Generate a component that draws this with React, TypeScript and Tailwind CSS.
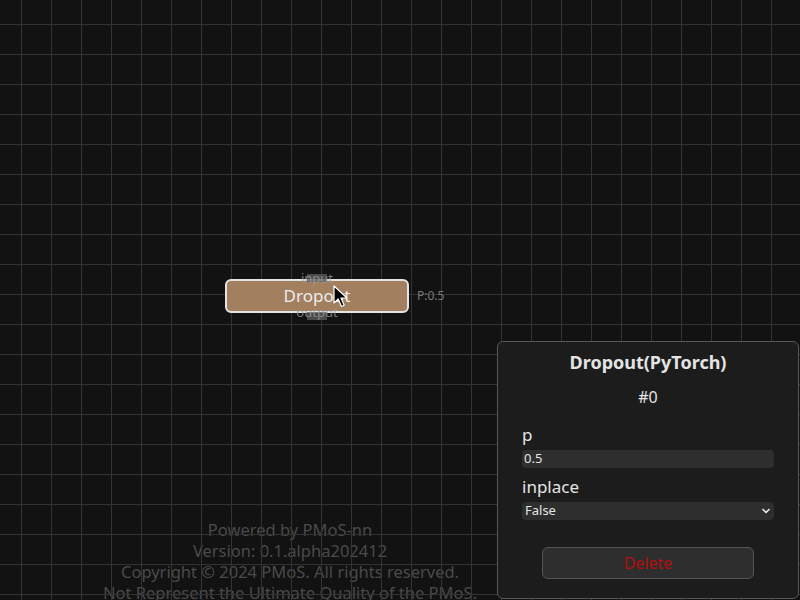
import { ChevronDown } from 'lucide-react';

function Cursor() {
	return (
		<svg className="absolute left-[333px] top-[285px]" width="16" height="24" viewBox="0 0 16 24">
			<path d="M1 1 L1 18 L5.2 14 L8.5 21.5 L11.2 20.3 L8 13 L14 13 Z" fill="#000" stroke="#fff" strokeWidth="1.2" strokeLinejoin="round" />
		</svg>
	);
}

function Node() {
	return (
		<div className="absolute left-[225px] top-[279px]">
			<div className="relative w-[184px] h-[34px] rounded-[6px] border-2 border-[#e4e4e4] bg-[#a2805f] flex items-center justify-center">
				<span className="text-[17px] text-[#ececec]">Dropout</span>
				<div className="absolute left-[80px] top-[-7px] w-[20px] h-[8px] bg-[#5a5a5a]/80" />
				<div className="absolute left-[80px] bottom-[-9px] w-[20px] h-[8px] bg-[#5a5a5a]/80" />
				<span className="absolute left-0 right-0 top-[-10px] text-center text-[13px] leading-[15px] text-[#9a9a9a]/80">input</span>
				<span className="absolute left-0 right-0 bottom-[-9px] text-center text-[13px] leading-[15px] text-[#9a9a9a]/80">output</span>
			</div>
			<span className="absolute left-[192px] top-[9px] text-[12px] leading-[16px] text-[#7a7a7a] whitespace-nowrap">P:0.5</span>
		</div>
	);
}

function Panel() {
	return (
		<div className="absolute left-[497px] top-[341px] w-[302px] h-[258px] rounded-[6px] border border-[#585858] bg-[#1c1c1c] flex flex-col px-[24px] pt-[7px]">
			<h2 className="text-[18px] leading-[27px] font-bold text-[#e4e4e4] text-center">Dropout(PyTorch)</h2>
			<div className="mt-[9px] text-[16px] leading-[24px] text-[#e4e4e4] text-center">#0</div>
			<label className="mt-[13px] text-[17px] leading-[25px] text-[#e4e4e4]">p</label>
			<div className="mt-[3px] h-[18px] rounded-[4px] bg-[#2e2e2e] flex items-center px-[2px] text-[13px] text-[#e4e4e4]">0.5</div>
			<label className="mt-[6px] text-[17px] leading-[25px] text-[#e4e4e4]">inplace</label>
			<div className="mt-[3px] h-[18px] rounded-[4px] bg-[#2e2e2e] flex items-center justify-between pl-[3px] pr-[2px] text-[13px] text-[#e4e4e4]">
				<span>False</span>
				<ChevronDown className="w-[12px] h-[12px]" strokeWidth={3.5} />
			</div>
			<button className="mt-[27px] mx-auto w-[212px] h-[32px] rounded-[6px] border border-[#555] bg-[#2e2e2e] text-[16px] text-[#b30e0e]">
				Delete
			</button>
		</div>
	);
}

export default function App() {
	return (
		<div className="relative w-[800px] h-[600px] overflow-hidden bg-[#121212] font-['Noto_Sans',sans-serif]">
			<div className="absolute left-0 top-[519px] w-[580px] flex flex-col items-center text-[16.5px] leading-[21px] text-[#4a4a4a]">
				<span>Powered by PMoS-nn</span>
				<span>Version: 0.1.alpha202412</span>
				<span>Copyright © 2024 PMoS. All rights reserved.</span>
				<span className="whitespace-nowrap">Not Represent the Ultimate Quality of the PMoS.</span>
			</div>
			<div className="absolute inset-0 bg-[linear-gradient(to_right,#333_1px,transparent_1px),linear-gradient(to_bottom,#333_1px,transparent_1px)] bg-size-[30px_30px] bg-position-[21px_24px]" />
			<Node />
			<Cursor />
			<Panel />
		</div>
	);
}
